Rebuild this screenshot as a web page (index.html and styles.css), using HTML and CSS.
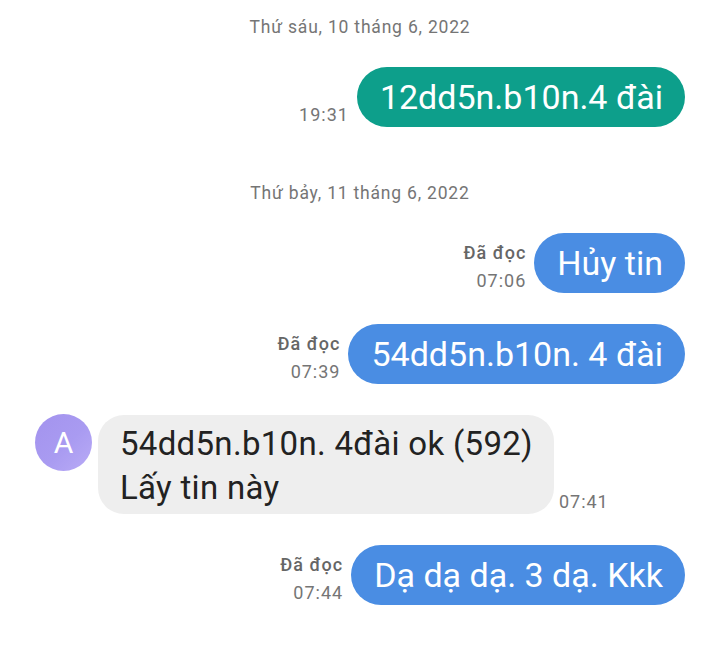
FILE: index.html
```html
<!DOCTYPE html>
<html lang="vi">
<head>
<meta charset="utf-8">
<link rel="stylesheet" href="styles.css">
</head>
<body>
<main class="chat">
  <section class="day">
    <div class="date">Thứ sáu, 10 tháng 6, 2022</div>
    <div class="msgs">
      <div class="row out">
        <div class="meta"><div class="time">19:31</div></div>
        <div class="bubble teal">12dd5n.b10n.4 đài</div>
      </div>
    </div>
  </section>
  <section class="day day2">
    <div class="date">Thứ bảy, 11 tháng 6, 2022</div>
    <div class="msgs">
      <div class="row out">
        <div class="meta"><div class="read">Đã đọc</div><div class="time">07:06</div></div>
        <div class="bubble blue">Hủy tin</div>
      </div>
      <div class="row out">
        <div class="meta"><div class="read">Đã đọc</div><div class="time">07:39</div></div>
        <div class="bubble blue">54dd5n.b10n. 4 đài</div>
      </div>
      <div class="row in">
        <div class="avatar">A</div>
        <div class="bubble gray">54dd5n.b10n. 4đài ok (592)<br>Lấy tin này</div>
        <div class="meta"><div class="time">07:41</div></div>
      </div>
      <div class="row out">
        <div class="meta"><div class="read">Đã đọc</div><div class="time">07:44</div></div>
        <div class="bubble blue">Dạ dạ dạ. 3 dạ. Kkk</div>
      </div>
    </div>
  </section>
</main>
</body>
</html>
```
FILE: styles.css
```css
html, body {
  margin: 0;
  padding: 0;
  background: #ffffff;
}
body {
  width: 720px;
  height: 666px;
  overflow: hidden;
  font-family: Roboto, "Noto Sans", sans-serif;
}
.chat {
  display: flex;
  flex-direction: column;
  padding: 15px 35px 0 35px;
}
.day2 {
  margin-top: 54px;
}
.date {
  text-align: center;
  font-size: 17.5px;
  letter-spacing: 0.8px;
  line-height: 24px;
  color: #757575;
  margin-bottom: 28px;
}
.msgs {
  display: flex;
  flex-direction: column;
  gap: 31px;
}
.row {
  display: flex;
  align-items: flex-end;
}
.row.out {
  justify-content: flex-end;
  gap: 8px;
}
.row.in {
  justify-content: flex-start;
}
.meta {
  display: flex;
  flex-direction: column;
  align-items: flex-end;
  font-size: 18px;
  letter-spacing: 1px;
  line-height: 24px;
  color: #757575;
}
.read {
  font-size: 18px;
  font-weight: 500;
  color: #666666;
  margin-bottom: 4px;
}
.bubble {
  font-size: 34px;
  line-height: 40px;
  padding: 10px 22px 10px 23px;
  border-radius: 30px;
  color: #ffffff;
  white-space: nowrap;
}
.teal {
  background: #0d9f8b;
}
.blue {
  background: #4a8de3;
}
.gray {
  background: #eeeeee;
  color: #222222;
  font-size: 33px;
  letter-spacing: 0.3px;
  line-height: 44px;
  padding: 7px 21px 4px 22px;
  border-radius: 26px;
  margin-left: 6px;
  margin-right: 5px;
}
.avatar {
  align-self: flex-start;
  width: 57px;
  height: 57px;
  border-radius: 50%;
  background: linear-gradient(135deg, #a393ee 0%, #a99bf1 55%, #b9abf6 100%);
  color: #ffffff;
  font-size: 30px;
  line-height: 57px;
  text-align: center;
  flex: none;
  margin-top: -1px;
}
```
